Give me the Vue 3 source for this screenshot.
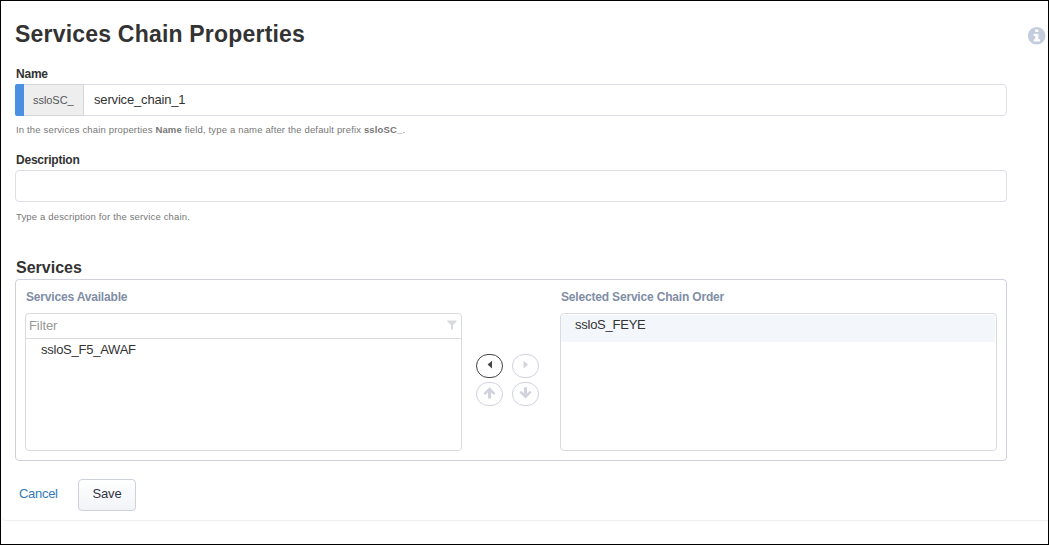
<script setup>
import { ref } from 'vue'

const name = 'service_chain_1'
const available = ref(['ssloS_F5_AWAF'])
const selected = ref(['ssloS_FEYE'])
</script>

<template>
  <main class="frame">
    <section class="form">
      <header class="head">
        <h1>Services Chain Properties</h1>
        <svg class="info" width="18" height="18" viewBox="0 0 18 18">
          <circle cx="8.7" cy="8.8" r="8.8" fill="#c3cddd" />
          <path d="M7.2 2.5h3.2v2.5H7.2zM5.7 6.8h4.7v5.4h1.5v2.3H5.7v-2.3h1.5V9H5.7z" fill="#fff" />
        </svg>
      </header>

      <div class="field">
        <label>Name</label>
        <div class="input">
          <span class="bar"></span>
          <span class="prefix">ssloSC_</span>
          <span class="value">{{ name }}</span>
        </div>
        <p class="hint">In the services chain properties <b>Name</b> field, type a name after the default prefix <b>ssloSC_</b>.</p>
      </div>

      <div class="field second">
        <label>Description</label>
        <div class="input"></div>
        <p class="hint">Type a description for the service chain.</p>
      </div>

      <h2>Services</h2>
      <div class="services">
        <div class="column">
          <h3>Services Available</h3>
          <div class="list">
            <div class="filter">
              <span>Filter</span>
              <svg width="10" height="10" viewBox="0 0 10 10"><path d="M.3.5h9.2v1L6 5v4.6H4V5L.3 1.5z" fill="#d7dadd" /></svg>
            </div>
            <div v-for="item in available" :key="item" class="item">{{ item }}</div>
          </div>
        </div>
        <div class="controls">
          <button class="active"><svg width="13" height="13" viewBox="0 0 13 13"><path d="M9 1.8v7.6L4.6 5.6z" /></svg></button>
          <button><svg width="13" height="13" viewBox="0 0 13 13"><path d="M4.6 1.8v7.6L9 5.6z" /></svg></button>
          <button><svg width="13" height="13" viewBox="0 0 13 13"><path d="M6.5.2l6 6-1.7 1.7L8.1 5.3v6.2H4.9V5.3L2.2 7.9.5 6.2z" /></svg></button>
          <button><svg width="13" height="13" viewBox="0 0 13 13"><path d="M6.5 11.5l6-6-1.7-1.7-2.7 2.6V.2H4.9v6.2L2.2 3.8.5 5.5z" /></svg></button>
        </div>
        <div class="column">
          <h3>Selected Service Chain Order</h3>
          <div class="list chosen">
            <div v-for="item in selected" :key="item" class="item highlighted">{{ item }}</div>
          </div>
        </div>
      </div>

      <div class="actions">
        <a>Cancel</a>
        <button class="save">Save</button>
      </div>
    </section>
  </main>
</template>

<style>
body {
  margin: 0;
  overflow: hidden;
}
</style>

<style scoped>
* {
  box-sizing: border-box;
}
h1, h2, h3, p {
  margin: 0;
}
.frame {
  height: 545px;
  border: 1px solid #000;
  background: #fff;
  font-family: "Liberation Sans", Arial, sans-serif;
  font-size: 13px;
  color: #333;
}
.form {
  height: 520px;
  margin-left: 1px;
  padding: 18px 41px 0 13px;
  border-bottom: 1px solid #f0f0f0;
  border-radius: 0 0 0 4px;
}
.head {
  display: flex;
  justify-content: space-between;
  height: 47px;
  margin-right: -39px;
}
h1 {
  font-size: 23px;
  line-height: 31px;
  letter-spacing: 0.2px;
}
.info {
  margin-top: 8px;
}
.field {
  height: 86px;
}
label {
  display: block;
  height: 18px;
  padding-left: 1px;
  font-size: 12px;
  line-height: 16px;
  font-weight: bold;
  letter-spacing: -0.22px;
}
.input {
  display: flex;
  height: 32px;
  border: 1px solid #dddfe7;
  border-radius: 4px;
}
.bar {
  width: 9px;
  margin: -1px 0 -1px -1px;
  background: #4a90e2;
  border-radius: 2px 0 0 2px;
}
.prefix {
  width: 60px;
  margin: -1px 0;
  padding-left: 9px;
  border: 1px solid #d5d5d8;
  border-left: 0;
  background: #eee;
  font-size: 11px;
  line-height: 30px;
  letter-spacing: -0.05px;
  color: #555;
}
.value {
  padding-left: 10px;
  line-height: 30px;
  letter-spacing: -0.17px;
}
.hint {
  padding: 7px 0 0 1px;
  font-size: 9.5px;
  line-height: 14px;
  letter-spacing: 0.16px;
  color: #777;
}
.second .hint {
  padding-top: 8px;
}
h2 {
  height: 41px;
  padding: 19px 0 0 1px;
  font-size: 16px;
  line-height: 22px;
}
.services {
  display: flex;
  height: 182px;
  padding: 9px 9px 0;
  border: 1px solid #cfd1dc;
  border-radius: 4px;
}
.column {
  width: 437px;
}
h3 {
  height: 24px;
  padding-left: 1px;
  font-size: 12px;
  line-height: 16px;
  letter-spacing: -0.18px;
  color: #7f8ea6;
}
.list {
  height: 138px;
  border: 1px solid #dadbdd;
  border-radius: 4px;
}
.filter {
  display: flex;
  justify-content: space-between;
  height: 25px;
  padding: 0 4px 0 3px;
  border-bottom: 1px solid #dadbdd;
  line-height: 23px;
  letter-spacing: -0.1px;
  color: #999;
}
.filter svg {
  margin-top: 6px;
}
.item {
  height: 27px;
  padding-left: 15px;
  line-height: 21px;
  letter-spacing: -0.25px;
}
.chosen {
  padding: 1px 1px 0 0;
}
.highlighted {
  padding-left: 14px;
  line-height: 19px;
  background: #f3f7fb;
}
.controls {
  display: grid;
  grid-template-columns: 27px 27px;
  grid-auto-rows: 24px;
  align-content: start;
  gap: 4px 9px;
  width: 98px;
  padding: 65px 0 0 14px;
}
.controls button {
  display: flex;
  justify-content: center;
  padding: 4px 0 0;
  border: 1px solid #d0d2dd;
  border-radius: 12px;
  background: #fff;
  fill: #d0d2dd;
}
.controls .active {
  border-color: #444;
  fill: #444;
}
.actions {
  display: flex;
  gap: 20px;
  padding: 18px 0 0 4px;
}
.actions a {
  width: 39px;
  line-height: 29px;
  letter-spacing: -0.3px;
  color: #337ab7;
}
.save {
  width: 58px;
  height: 32px;
  padding: 0 0 3px;
  border: 1px solid #cdd1db;
  border-radius: 4px;
  background: linear-gradient(#fff, #f1f3f7);
  font: 13px "Liberation Sans", Arial, sans-serif;
  letter-spacing: -0.2px;
  color: #334;
}
</style>
